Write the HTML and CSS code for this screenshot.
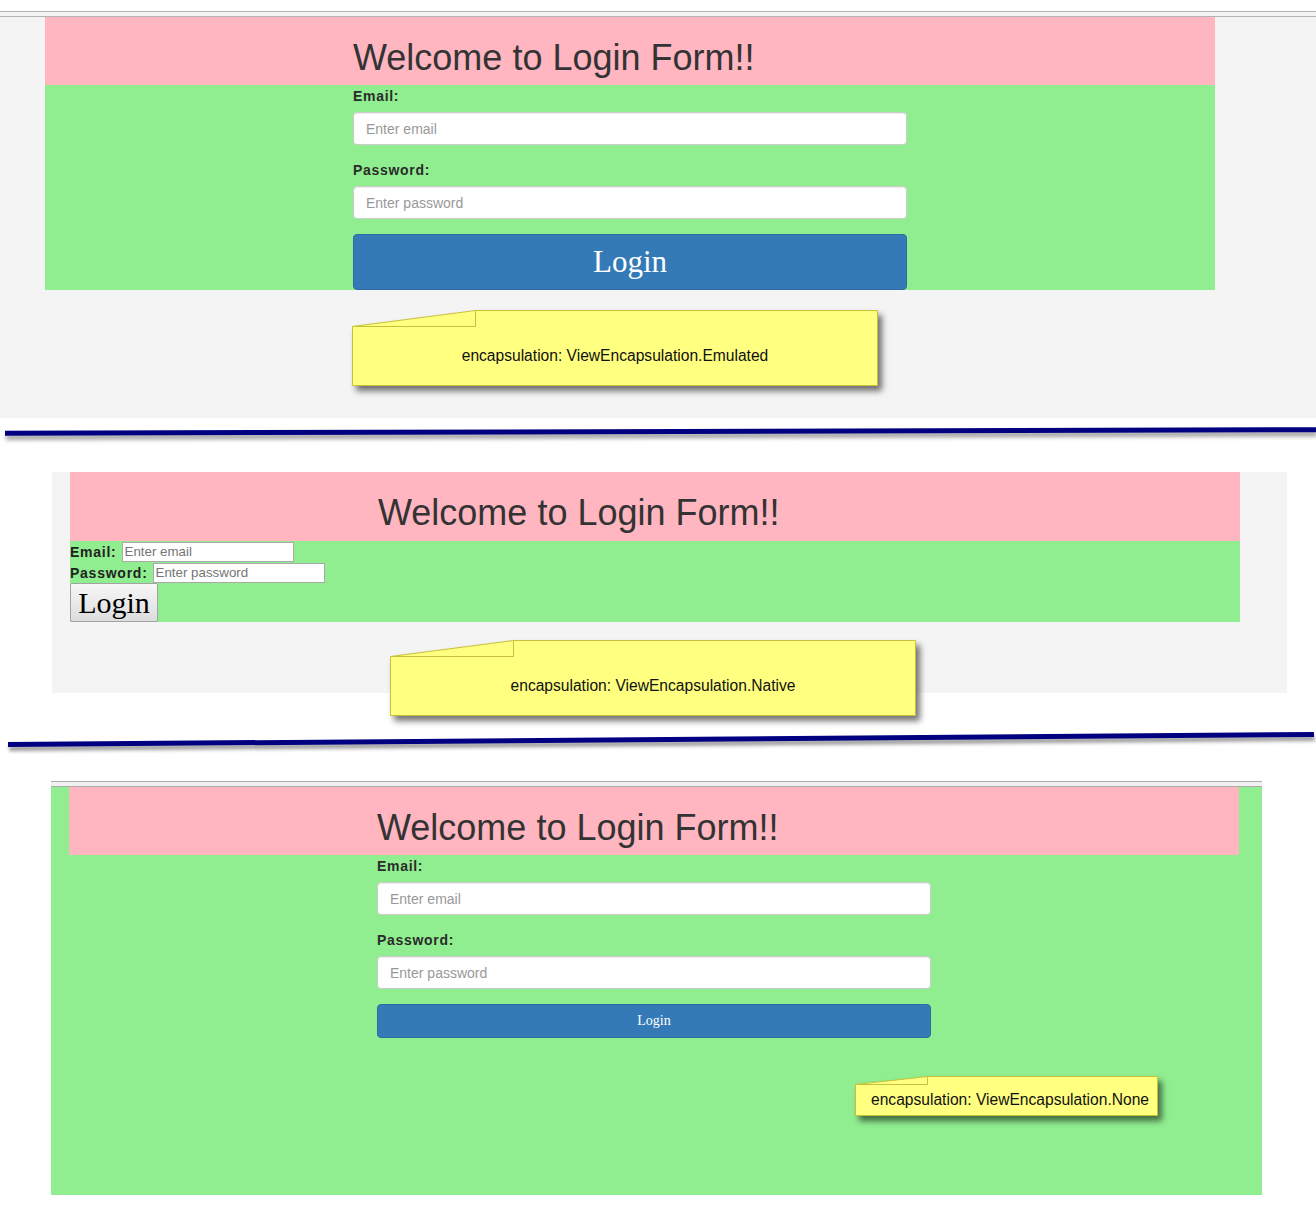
FILE: index.html
```html
<!DOCTYPE html>
<html lang="en">
<head>
<meta charset="utf-8">
<title>ViewEncapsulation demo</title>
<link rel="stylesheet" href="styles.css">
</head>
<body>

<section class="shot shot-emulated">
  <div class="shot-frame">
    <div class="login-host host-emulated">
      <div class="login-head"><h1 class="login-title">Welcome to Login Form!!</h1></div>
      <form class="login-form bs-form">
        <div class="form-group">
          <label class="form-label">Email:</label>
          <input class="form-control" type="text" placeholder="Enter email">
        </div>
        <div class="form-group">
          <label class="form-label">Password:</label>
          <input class="form-control" type="password" placeholder="Enter password">
        </div>
        <button type="button" class="btn-primary btn-huge">Login</button>
      </form>
    </div>
    <div class="note note-big note-emulated">
      <svg class="note-bg" width="526" height="76" viewBox="0 0 526 76">
        <polygon class="note-paper" points="0.5,16.5 123.5,0.5 525.5,0.5 525.5,75.5 0.5,75.5"/>
        <polyline class="note-fold" points="0.5,16.5 123.5,16.5 123.5,0.5"/>
      </svg>
      <div class="note-text note-text-big">encapsulation: ViewEncapsulation.Emulated</div>
    </div>
  </div>
</section>

<div class="divider divider-one"></div>

<section class="shot shot-native">
  <div class="login-host host-native">
    <div class="login-head head-native"><h1 class="login-title">Welcome to Login Form!!</h1></div>
    <form class="login-form plain-form">
      <div class="plain-row">
        <label class="form-label plain-label">Email:</label>
        <input class="plain-input plain-email" type="text" placeholder="Enter email">
      </div>
      <div class="plain-row">
        <label class="form-label plain-label">Password:</label>
        <input class="plain-input plain-password" type="password" placeholder="Enter password">
      </div>
      <button type="button" class="plain-button">Login</button>
    </form>
  </div>
  <div class="note note-big note-native">
    <svg class="note-bg" width="526" height="76" viewBox="0 0 526 76">
      <polygon class="note-paper" points="0.5,16.5 123.5,0.5 525.5,0.5 525.5,75.5 0.5,75.5"/>
      <polyline class="note-fold" points="0.5,16.5 123.5,16.5 123.5,0.5"/>
    </svg>
    <div class="note-text note-text-big">encapsulation: ViewEncapsulation.Native</div>
  </div>
</section>

<div class="divider divider-two"></div>

<section class="shot shot-none">
  <div class="shot-frame frame-none">
    <div class="login-host host-none">
      <div class="login-head"><h1 class="login-title">Welcome to Login Form!!</h1></div>
      <form class="login-form bs-form form-none">
        <div class="form-group">
          <label class="form-label">Email:</label>
          <input class="form-control" type="text" placeholder="Enter email">
        </div>
        <div class="form-group">
          <label class="form-label">Password:</label>
          <input class="form-control" type="password" placeholder="Enter password">
        </div>
        <button type="button" class="btn-primary btn-normal">Login</button>
      </form>
    </div>
    <div class="note note-small note-none">
      <svg class="note-bg" width="303" height="40" viewBox="0 0 303 40">
        <polygon class="note-paper" points="0.5,8.5 72.5,0.5 302.5,0.5 302.5,39.5 0.5,39.5"/>
        <polyline class="note-fold" points="0.5,8.5 72.5,8.5 72.5,0.5"/>
      </svg>
      <div class="note-text note-text-small">encapsulation: ViewEncapsulation.None</div>
    </div>
  </div>
</section>

</body>
</html>
```

FILE: styles.css
```css
html, body {
  margin: 0;
  padding: 0;
  background: #ffffff;
}

body {
  font-family: "Liberation Sans", Arial, Helvetica, sans-serif;
  color: #333333;
  width: 1316px;
  overflow: hidden;
}

/* ---------- section 1 : emulated ---------- */
.shot-emulated {
  margin-top: 11px;
  border-top: 1px solid #b3b3b3;
  background: #f4f4f4;
  padding-top: 4px;
}

.shot-emulated > .shot-frame {
  border-top: 1px solid #b3b3b3;
  padding-bottom: 32px;
}

.login-host {
  width: 1170px;
}

.host-emulated {
  margin-left: 45px;
}

.login-head {
  background: #ffb6c1;
  height: 68px;
  box-sizing: border-box;
  padding-left: 308px;
}

.login-title {
  margin: 0;
  padding-top: 21px;
  font-size: 36px;
  line-height: 40px;
  font-weight: normal;
  color: #333333;
  white-space: nowrap;
}

.login-form {
  background: #90ee90;
  margin: 0;
}

.bs-form {
  padding: 1px 0 0 308px;
}

.form-group {
  margin-bottom: 15px;
  width: 554px;
}

.form-label {
  display: block;
  font-size: 14px;
  line-height: 20px;
  font-weight: bold;
  letter-spacing: 0.7px;
  color: #2b2b2b;
  margin-bottom: 6px;
}

.form-control {
  display: block;
  width: 554px;
  height: 33px;
  box-sizing: border-box;
  margin: 0;
  padding: 6px 12px;
  font-family: "Liberation Sans", Arial, sans-serif;
  font-size: 14px;
  color: #555555;
  background: #ffffff;
  border: 1px solid #cccccc;
  border-radius: 4px;
  box-shadow: inset 0 1px 1px rgba(0, 0, 0, 0.075);
  outline: none;
}

.form-control::placeholder {
  color: #999999;
  opacity: 1;
}

.btn-primary {
  display: block;
  width: 554px;
  box-sizing: border-box;
  margin: 0;
  padding: 0;
  background: #337ab7;
  border: 1px solid #2e6da4;
  border-radius: 4px;
  color: #ffffff;
  font-family: "Liberation Serif", "Times New Roman", serif;
  cursor: pointer;
}

.btn-huge {
  height: 56px;
  font-size: 31px;
  line-height: 54px;
}

.btn-normal {
  height: 34px;
  font-size: 14px;
  line-height: 32px;
}

/* ---------- notes ---------- */
.note {
  position: relative;
}

.note-bg {
  position: absolute;
  left: 0;
  top: 0;
  display: block;
  filter: drop-shadow(4px 5px 3px rgba(0, 0, 0, 0.55));
}

.note-paper {
  fill: #ffff80;
  stroke: #c8c03a;
  stroke-width: 1;
}

.note-fold {
  fill: none;
  stroke: #c8c03a;
  stroke-width: 1;
}

.note-text {
  position: relative;
  box-sizing: border-box;
  font-size: 15.6px;
  color: #111111;
  white-space: nowrap;
  display: flex;
  align-items: center;
}

.note-big {
  width: 526px;
  height: 76px;
}

.note-text-big {
  padding-top: 16px;
  height: 76px;
  justify-content: center;
}

.note-emulated {
  margin: 20px 0 0 352px;
}

/* ---------- dividers ---------- */
.divider {
  height: 5px;
  background: #000080;
  box-shadow: 1px 4px 4px rgba(0, 0, 0, 0.4);
}

.divider-one {
  width: 1311px;
  margin: 11px 0 0 5px;
  transform: rotate(-0.155deg);
}

.divider-two {
  width: 1306px;
  margin: 44px 0 0 8px;
  transform: rotate(-0.44deg);
}

/* ---------- section 2 : native ---------- */
.shot-native {
  margin: 38px 0 0 52px;
  width: 1235px;
  height: 221px;
  box-sizing: border-box;
  background: #f4f4f4;
  padding-left: 18px;
}

.head-native {
  height: 69px;
}

.plain-form {
  padding: 0;
}

.plain-row {
  display: flex;
  align-items: center;
  height: 21px;
}

.plain-label {
  display: inline-block;
  margin: 0 5px 0 0;
  line-height: 16px;
  letter-spacing: 0.75px;
  color: #222222;
}

.plain-input {
  height: 20px;
  box-sizing: border-box;
  margin: 0;
  padding: 1px 2px;
  border: 1px solid #a9a9a9;
  background: #ffffff;
  font-family: "Liberation Sans", Arial, sans-serif;
  font-size: 13.33px;
  color: #000000;
  outline: none;
}

.plain-input::placeholder {
  color: #757575;
  opacity: 1;
}

.plain-email {
  width: 172px;
}

.plain-password {
  width: 172px;
}

.plain-button {
  display: block;
  height: 39px;
  width: 88px;
  box-sizing: border-box;
  margin: 0;
  padding: 0 7px;
  border: 1px solid #a3a3a3;
  border-radius: 2px;
  background: linear-gradient(#f7f7f7, #dddddd);
  font-family: "Liberation Serif", "Times New Roman", serif;
  font-size: 30px;
  line-height: 36px;
  color: #000000;
}

.note-native {
  margin: 18px 0 -23px 320px;
}

/* ---------- section 3 : none ---------- */
.shot-none {
  margin: 39px 0 0 51px;
  width: 1211px;
  border-top: 1px solid #ababab;
  background: #f1f1f1;
  padding-top: 4px;
}

.frame-none {
  border-top: 1px solid #ababab;
  background: #90ee90;
  padding-left: 18px;
  height: 409px;
  box-sizing: border-box;
}

.form-none {
  background: transparent;
}

.note-small {
  width: 303px;
  height: 40px;
  margin: 38px 0 0 786px;
}

.note-text-small {
  padding-top: 8px;
  height: 40px;
  padding-left: 16px;
}
```
